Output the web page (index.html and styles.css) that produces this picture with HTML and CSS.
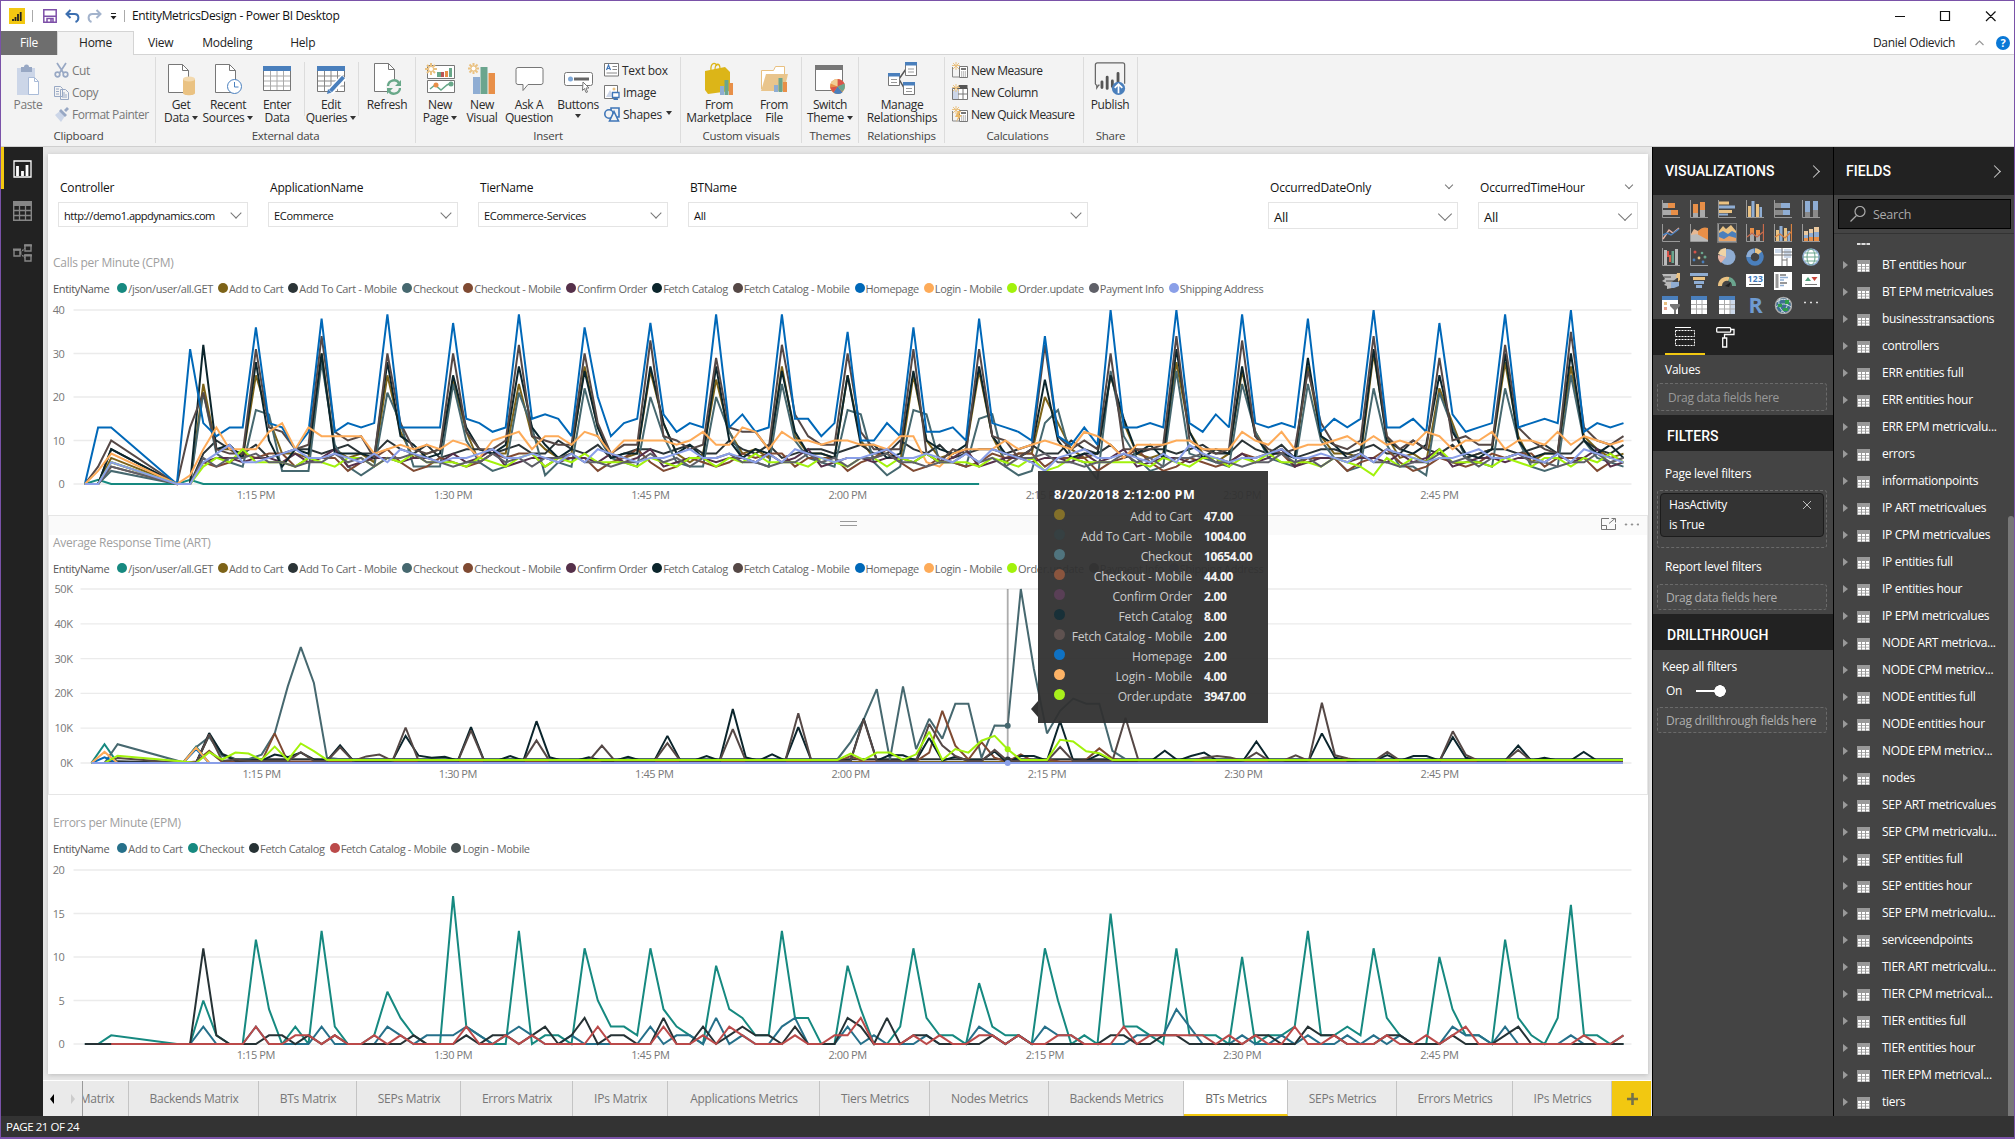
FILE: index.html
```html
<!DOCTYPE html>
<html lang="en">
<head>
<meta charset="utf-8">
<title>EntityMetricsDesign - Power BI Desktop</title>
<link rel="stylesheet" href="styles.css">
</head>
<body>
<div class="window">
  <header class="titlebar">
    <svg class="logo" width="16" height="16" viewBox="0 0 16 16"><rect width="16" height="16" fill="#f2c811"/><path d="M4 11v2M6.5 9v4M9 6v7M11.700 4v9" stroke="#222" stroke-width="1.800"/></svg>
    <i class="tsep"></i>
    <svg class="save" width="14" height="14" viewBox="0 0 14 14" fill="none" stroke="#7d4fa8" stroke-width="1.500"><path d="M.8.800h12.400v12.400H.8zM1 7.200h12M4 13V9.500h6V13M8 10v3"/></svg>
    <svg class="undo" width="15" height="14" viewBox="0 0 15 14" fill="none" stroke="#3c6fb0" stroke-width="2"><path d="M5.500 1 1.500 5l4 4M2 5h7.500c5 0 5 6.500 1 8"/></svg>
    <svg class="redo" width="15" height="14" viewBox="0 0 15 14" fill="none" stroke="#a3b3cc" stroke-width="2"><path d="m9.500 1 4 4-4 4M13 5H5.500c-5 0-5 6.500-1 8"/></svg>
    <svg class="more" width="7" height="8" viewBox="0 0 7 8"><path d="M1 1.500h5" stroke="#222"/><path d="M.5 4h6l-3 3.500z" fill="#222"/></svg>
    <i class="tsep"></i>
    <span class="apptitle">EntityMetricsDesign - Power BI Desktop</span>
    <svg class="winctl" width="104" height="12" viewBox="0 0 104 12" fill="none" stroke="#111" stroke-width="1.200"><path d="M1 6.500h10M46.500 1.500h9v9h-9zM92 1.500l9.500 9.500M101.500 1.500 92 11"/></svg>
  </header>
  <nav class="tabs">
    <span class="tab file">File</span><span class="tab home">Home</span><span class="tab">View</span><span class="tab modeling">Modeling</span><span class="tab help">Help</span>
    <span class="user">Daniel Odievich</span>
    <svg width="9" height="6" viewBox="0 0 9 6" fill="none" stroke="#999" stroke-width="1.200"><path d="M.5 5 4.500 1l4 4"/></svg>
    <span class="helpdot">?</span>
  </nav>

  <section class="ribbon">
    <div class="group g-clip"><div class="tools">
      <div class="btn w52 dim"><svg width="24" height="32" viewBox="0 0 24 32"><path d="M1 5h18v27H1z" fill="#ccd6e8"/><path d="M5 4h3a2.500 2.500 0 0 1 5 0h3v5H5z" fill="#98a8c4"/><path d="M12.500 14.500h6l4 4v13h-10z" fill="#fff" stroke="#a9bbd8"/><path d="M18.500 14.500v4h4" fill="none" stroke="#a9bbd8"/></svg><b>Paste</b></div>
      <div class="col dim">
        <p><svg width="15" height="16" viewBox="0 0 15 16" fill="none" stroke="#98a8c4" stroke-width="1.700"><path d="m3 1 6.500 10M12 1 5.500 11"/><circle cx="3.500" cy="12.500" r="2.300"/><circle cx="11.500" cy="12.500" r="2.300"/></svg>Cut</p>
        <p><svg width="15" height="15" viewBox="0 0 15 15" fill="#f3f3f3" stroke="#98a8c4"><path d="M.5 1.500h6l2 2v8h-8zM6.500 4.500h5l3 3v7h-8z"/><path d="M2 4h3M2 6.500h3M2 9h3M8 8h3M8 10h5M8 12h5"/></svg>Copy</p>
        <p><svg width="15" height="15" viewBox="0 0 15 15"><path d="m1 8 5-4 5 5-4 6z" fill="#ccd6e8"/><path d="m5 4 2-2 6 6-2 2zM10 3l3-3 2 2-3 3z" fill="#98a8c4"/></svg>Format Painter</p>
      </div></div><h6>Clipboard</h6></div>

    <div class="group g-ext"><div class="tools">
      <div class="btn w50"><svg width="28" height="32" viewBox="0 0 28 32"><path d="M1.500 1.500h14l6 6v22h-20z" fill="#fff" stroke="#777"/><path d="M15.500 1.500v6h6" fill="none" stroke="#777"/><path d="M16 16h12v14c0 3-12 3-12 0z" fill="#eac282"/><ellipse cx="22" cy="16" rx="6" ry="2.500" fill="#f3d9ae"/></svg><b>Get<br>Data<u></u></b></div>
      <div class="btn w44"><svg width="28" height="32" viewBox="0 0 28 32"><path d="M1.500 1.500h14l6 6v22h-20z" fill="#fff" stroke="#777"/><path d="M15.500 1.500v6h6" fill="none" stroke="#777"/><circle cx="20.500" cy="23.500" r="7" fill="#fff" stroke="#4a80bf"/><path d="M20.500 19v5h4" fill="none" stroke="#4a80bf"/></svg><b>Recent<br>Sources<u></u></b></div>
      <div class="btn w54"><svg width="28" height="32" viewBox="0 0 28 32"><path d="M.5 3.500h27v24H.5z" fill="#fff" stroke="#777"/><path d="M0 3h28v5H0z" fill="#4a7fbc"/><path d="M1 13h26M1 18h26M1 23h26M7.500 8v19M14 8v19M20.500 8v19" stroke="#aaa"/></svg><b>Enter<br>Data</b></div>
      <div class="btn w54 lined"><svg width="29" height="32" viewBox="0 0 29 32"><path d="M.5 3.500h27v25H.5z" fill="#fff" stroke="#777"/><path d="M0 3h28v5H0z" fill="#4a7fbc"/><path d="M1 13h26M1 18h26M1 23h26M7.500 8v20M14 8v20M20.500 8v20" stroke="#888"/><path d="M27 14 13 29" stroke="#fff" stroke-width="7"/><path d="m26.500 14-13 14" stroke="#4a7fbc" stroke-width="4"/><path d="m10 31 1-5 3.500 3.500z" fill="#4a7fbc"/></svg><b>Edit<br>Queries<u></u></b></div>
      <div class="btn w58 lined"><svg width="28" height="32" viewBox="0 0 28 32"><path d="M1.500.500h14l6 6v22h-20z" fill="#fff" stroke="#777"/><path d="M15.500.500v6h6" fill="none" stroke="#777"/><circle cx="21" cy="24" r="8" fill="#f3f3f3"/><path d="M15 23a6 6 0 0 1 11-3M27 25a6 6 0 0 1-11 3" fill="none" stroke="#68a889" stroke-width="2.300"/><path d="M28 17v6h-6zM14 31v-6h6z" fill="#68a889"/></svg><b>Refresh</b></div>
    </div><h6>External data</h6></div>

    <div class="group g-ins"><div class="tools">
      <div class="btn w48"><svg width="30" height="32" viewBox="0 0 30 32"><path d="M2.500 2.500h27v13h-27zM2.500 17.500h27v12h-27z" fill="#fff" stroke="#777"/><path d="M16 9h3v5h-3z" fill="#b55"/><path d="M12 9h4v5h-4zM24 5h3v9h-3z" fill="#68a889"/><path d="M20 8h3v6h-3z" fill="#e88f48"/><path d="m5 26 5-4 6 5 6-5 4-2" fill="none" stroke="#68a889" stroke-width="1.500"/><circle cx="11" cy="22" r="2.500" fill="#e88f48"/><circle cx="26" cy="21" r="2.500" fill="#68a889"/><path d="M0 6h12M6 0v12M2 2l8 8M10 2 2 10" stroke="#eac282" stroke-width="2"/><circle cx="6" cy="6" r="2" fill="#fff"/></svg><b>New<br>Page<u></u></b></div>
      <div class="btn w36"><svg width="28" height="32" viewBox="0 0 28 32"><path d="M5 14h7v17H5z" fill="#8fadd3"/><path d="M12.500 4h7v27h-7z" fill="#6ba58e"/><path d="M20.500 10H27v21h-6.500z" fill="#e88f48"/><path d="M0 5.500h11M5.500 0v11M1.500 1.500l8 8M9.500 1.500l-8 8" stroke="#eac282" stroke-width="2"/><circle cx="5.500" cy="5.500" r="2" fill="#fff"/></svg><b>New<br>Visual</b></div>
      <div class="btn w58"><svg width="29" height="32" viewBox="0 0 29 32"><path d="M3 4.500h23a2 2 0 0 1 2 2v13a2 2 0 0 1-2 2H13l-5 6v-6H3a2 2 0 0 1-2-2v-13a2 2 0 0 1 2-2z" fill="#fff" stroke="#777"/></svg><b>Ask A<br>Question</b></div>
      <div class="btn w40"><svg width="29" height="32" viewBox="0 0 29 32"><rect x=".5" y="9.500" width="28" height="13" rx="2" fill="#fff" stroke="#777"/><circle cx="6.500" cy="16" r="2.500" fill="#7fa9d8"/><path d="M10 16h15" stroke="#666" stroke-width="3"/><path d="m19 19 6 6h-3l1.500 4-1.500.5-1.500-4-2 2z" fill="#fff" stroke="#777"/></svg><b>Buttons<br><u class="solo"></u></b></div>
      <div class="col">
        <p><svg width="15" height="14" viewBox="0 0 15 14"><path d="M.5.500h14v12.500H.5z" fill="#fff" stroke="#777"/><path d="m2.500 7 2-5 2 5M3 5.500h3" fill="none" stroke="#3f76b8" stroke-width="1.200"/><path d="M8.500 3.500H13M8.500 6.500H13M2.500 10H13" stroke="#888"/></svg>Text box</p>
        <p><svg width="16" height="15" viewBox="0 0 16 15"><path d="M.5.500h13v13H.5z" fill="#fff" stroke="#777"/><path d="m2 12 4-7 4 7z" fill="#ccd6e8"/><circle cx="10" cy="4" r="1.500" fill="#eac282"/><path d="M8.500 7.500H15v5H8.500zM11.700 13v1.500M9.500 14.500H14" fill="#fff" stroke="#3f76b8" stroke-width="1.300"/></svg>Image</p>
        <p><svg width="16" height="15" viewBox="0 0 16 15" fill="#f3f3f3" stroke="#3f76b8" stroke-width="1.600"><path d="M7 1h8v9H7z"/><circle cx="5" cy="7" r="4.200"/><path d="m10 4.500 4.500 9.500h-9z"/></svg>Shapes<u></u></p>
      </div></div><h6>Insert</h6></div>

    <div class="group g-cust"><div class="tools">
      <div class="btn w76"><svg width="30" height="34" viewBox="0 0 30 34"><path d="m1 9 20-4 5 5v19L4 32l-3-4z" fill="#dcb518"/><path d="M7 9c-1-9 5-9 6-5M11 8c0-8 5-7 5-1" fill="none" stroke="#dcb518" stroke-width="1.300"/><path d="M16 24h4v9h-4z" fill="#8fadd3"/><path d="M20.500 18h4v15h-4z" fill="#6ba58e"/><path d="M25 21h4v12h-4z" fill="#e88f48"/></svg><b>From<br>Marketplace</b></div>
      <div class="btn w34"><svg width="29" height="32" viewBox="0 0 29 32"><path d="M1.500 26V7.500h12l2-4h9V26" fill="#fff" stroke="#e8c080"/><path d="m1 28 5-17h22l-4 17z" fill="#e9c58c"/><path d="M14 22h4v7h-4z" fill="#8fadd3"/><path d="M18.500 15h4v14h-4z" fill="#6ba58e"/><path d="M23 19h4v10h-4z" fill="#e88f48"/></svg><b>From<br>File</b></div>
    </div><h6>Custom visuals</h6></div>

    <div class="group g-theme"><div class="tools">
      <div class="btn w56"><svg width="31" height="32" viewBox="0 0 31 32"><path d="M.5 2.500h27v25H.5z" fill="#fff" stroke="#777"/><path d="M0 2h28v5H0z" fill="#777"/><circle cx="22.500" cy="23.500" r="7.500" fill="#e88f48"/><path d="M22.500 23.500V16a8 8 0 0 1 7 5z" fill="#d9534a"/><path d="m22.500 23.500 7-3a8 8 0 0 1-2 8z" fill="#6ba58e"/><path d="m22.500 23.500 5 6a8 8 0 0 1-9 0z" fill="#4a7fbc"/><path d="m22.500 23.500-7-3A8 8 0 0 1 22.500 16z" fill="#f1cd94"/><path d="m22.500 23.500-4 6-3.500-5z" fill="#d9534a"/></svg><b>Switch<br>Theme<u></u></b></div>
    </div><h6>Themes</h6></div>

    <div class="group g-rel"><div class="tools">
      <div class="btn w86"><svg width="29" height="34" viewBox="0 0 29 34"><path d="M11 17 18 7M11 17l5 9" stroke="#555" fill="none" stroke-width="1.500"/><path d="M.5 11.500h11v12H.5zM17.500.500h11v13h-11zM15.500 20.500h11v12h-11z" fill="#fff" stroke="#777"/><path d="M0 11h12v3.500H0zM17 0h12v3.500H17zM15 20h12v3.500H15z" fill="#4a7fbc"/><path d="M3 17.500h6M3 20.500h6M20 7h6M20 10h6M18 26.500h6M18 29.500h6" stroke="#999"/></svg><b>Manage<br>Relationships</b></div>
    </div><h6>Relationships</h6></div>

    <div class="group g-calc"><div class="tools">
      <div class="col">
        <p><svg width="16" height="16" viewBox="0 0 16 16"><path d="M.5 5v10H7" fill="none" stroke="#888"/><path d="M7.500 4.500h8v11h-8z" fill="#fff" stroke="#777"/><path d="M9 7h5" stroke="#777" stroke-width="2"/><path d="M9 10h5M9 12h5M9 14h5" stroke="#888" stroke-dasharray="1.300 .7"/><path d="M0 3.500h8M4 0v8M1 1l6 6M7 1 1 7" stroke="#eac282"/></svg>New Measure</p>
        <p><svg width="16" height="16" viewBox="0 0 16 16"><path d="M.5 4.500h15v11H.5zM0 10h15M6 5v10M11 2v13" fill="#fff" stroke="#777"/><path d="M6.500 1h9v4h-9z" fill="#555"/><path d="M1 6h5v9H1z" fill="#ccd6e8"/><path d="M0 3.500h8M4 0v8M1 1l6 6M7 1 1 7" stroke="#eac282"/></svg>New Column</p>
        <p><svg width="16" height="16" viewBox="0 0 16 16"><path d="M.5 5v10H7" fill="none" stroke="#888"/><path d="M7.500 4.500h8v11h-8z" fill="#fff" stroke="#777"/><path d="M9 7h5" stroke="#777" stroke-width="2"/><path d="M9 10h5M9 12h5M9 14h5" stroke="#888" stroke-dasharray="1.300 .7"/><path d="M0 3.500h8M4 0v8M1 1l6 6M7 1 1 7" stroke="#eac282"/><path d="m6 5-3 6h3l-2 5 6-7H7l2-4z" fill="#eab868"/></svg>New Quick Measure</p>
      </div></div><h6>Calculations</h6></div>

    <div class="group g-share"><div class="tools">
      <div class="btn w52"><svg width="32" height="36" viewBox="0 0 32 36"><path d="M5 24.500H4l-2 3v-3A2 2 0 0 1 .500 22V3A2 2 0 0 1 2.500 1h27a2 2 0 0 1 2 2v20" fill="none" stroke="#666" stroke-width="1.300"/><path d="M7.500 21v6M13 16v12M18.500 20v6M24.500 12v10" stroke="#555" stroke-width="3" stroke-linecap="round"/><circle cx="25" cy="28" r="7" fill="#4a7fbc"/><path d="M25 33v-9M21 27.500l4-4 4 4" fill="none" stroke="#fff" stroke-width="1.800"/></svg><b>Publish</b></div>
    </div><h6>Share</h6></div>
  </section>

  <main class="work">
    <aside class="rail">
      <span class="on"><svg width="19" height="18" viewBox="0 0 19 18"><path d="M1 1h17v16H1z" fill="none" stroke="#fff" stroke-width="1.300"/><path d="M4.500 6v10M9.500 11v5M14 5v11" stroke="#fff" stroke-width="2.800"/></svg></span>
      <span><svg width="19" height="20" viewBox="0 0 19 20"><path d="M.7.700h17.600v18.600H.7z" fill="none" stroke="#868686" stroke-width="1.400"/><path d="M0 0h19v5H0z" fill="#868686"/><path d="M0 9.500h19M0 14.500h19M6.500 4v16M12.500 4v16" stroke="#868686" stroke-width="1.300"/></svg></span>
      <span><svg width="19" height="18" viewBox="0 0 19 18" fill="none" stroke="#868686" stroke-width="1.400"><path d="M1 6h6v6H1zM12 1h6v6h-6zM12 11h6v6h-6z"/><path d="m7 9 5-5M7 9l5 5" stroke-dasharray="2 1"/><path d="M0 5.500h8M11 1.500h8M11 11.500h8" stroke-width="2"/></svg></span>
    </aside>

    <section class="center">
      <div class="page">
        <div class="slicers">
          <div class="slicer s1"><label>Controller</label><div>http://demo1.appdynamics.com<i class="chev"></i></div></div>
          <div class="slicer s2"><label>ApplicationName</label><div>ECommerce<i class="chev"></i></div></div>
          <div class="slicer s3"><label>TierName</label><div>ECommerce-Services<i class="chev"></i></div></div>
          <div class="slicer s4"><label>BTName</label><div>All<i class="chev"></i></div></div>
          <div class="slicer s5 big"><label>OccurredDateOnly<i class="chev sm"></i></label><div>All<i class="chev"></i></div></div>
          <div class="slicer s6 big"><label>OccurredTimeHour<i class="chev sm"></i></label><div>All<i class="chev"></i></div></div>
        </div>
        <div class="visual" id="cpm"><h3>Calls per Minute (CPM)</h3><div class="legend"></div></div>
        <div class="visual selected" id="art"><div class="vhead"><i class="grip"></i><svg width="38" height="13" viewBox="0 0 38 13" fill="none" stroke="#777"><path d="M8 .500H.500v11h14V6M.500 7.500h5v4M8 5.500 14 .500M10.500.500h4v4"/><circle cx="25" cy="6.500" r=".7"/><circle cx="31" cy="6.500" r=".7"/><circle cx="37" cy="6.500" r=".7"/></svg></div><h3>Average Response Time (ART)</h3><div class="legend"></div></div>
        <div class="visual" id="epm"><h3>Errors per Minute (EPM)</h3><div class="legend"></div></div>
        <div class="tooltip"><h4>8/20/2018 2:12:00 PM</h4><div class="rows"></div></div>
      </div>
      <nav class="pages">
        <span class="arrows"><i class="l"></i><i class="r"></i></span><span class="p0"><em>Matrix</em></span><span class="p1">Backends Matrix</span><span class="p2">BTs Matrix</span><span class="p3">SEPs Matrix</span><span class="p4">Errors Matrix</span><span class="p5">IPs Matrix</span><span class="p6">Applications Metrics</span><span class="p7">Tiers Metrics</span><span class="p8">Nodes Metrics</span><span class="p9">Backends Metrics</span><span class="p10 active">BTs Metrics</span><span class="p11">SEPs Metrics</span><span class="p12">Errors Metrics</span><span class="p13">IPs Metrics</span><span class="add"><svg width="11" height="12" viewBox="0 0 11 12"><path d="M5.500 0v12M0 6h11" stroke="#75724a" stroke-width="2.600"/></svg></span>
      </nav>
    </section>

    <aside class="viz">
      <h2>VISUALIZATIONS<i class="chev right"></i></h2>
      <div class="gallery">
        <svg viewBox="0 0 18 18"><path d="M.5 0v17.500H18" class="ax"/><path d="M1 3h5v5H1zM1 10h8v5H1z" fill="#aaa"/><path d="M6 3h7v5H6zM9 10h7v5H9z" fill="#e88f48"/></svg>
        <svg viewBox="0 0 18 18"><path d="M.5 0v17.500H18" class="ax"/><path d="M3 4h5v9H3zM10 2h5v8h-5z" fill="#e88f48"/><path d="M3 13h5v4H3zM10 10h5v7h-5z" fill="#aaa"/></svg>
        <svg viewBox="0 0 18 18"><path d="M.5 0v17.500H18" class="ax"/><path d="M1 1.500h10v3H1zM1 10h13v3H1z" fill="#eac282"/><path d="M1 5.500h16v3H1zM1 13.500h9v2H1z" fill="#8fadd3"/></svg>
        <svg viewBox="0 0 18 18"><path d="M.5 0v17.500H18" class="ax"/><path d="M2 6h3v11H2zM10 4h3v13h-3z" fill="#eac282"/><path d="M5.500 1h3v16h-3zM13.500 7h2.500v10h-2.500z" fill="#8fadd3"/></svg>
        <svg viewBox="0 0 18 18"><path d="M.5 0v17.500H18" class="ax"/><path d="M1 3h6v5H1zM1 10h8v5H1z" fill="#8a8a8a"/><path d="M7 3h9v5H7zM9 10h7v5H9z" fill="#8fadd3"/></svg>
        <svg viewBox="0 0 18 18"><path d="M.5 0v17.500H18" class="ax"/><path d="M3 1h5v11H3zM11 1h5v9h-5z" fill="#8fadd3"/><path d="M3 12h5v5H3zM11 10h5v7h-5z" fill="#8a8a8a"/></svg>

        <svg viewBox="0 0 18 18"><path d="M.5 0v17.500H18" class="ax"/><path d="m1 15 6-9 4 3 6-5" fill="none" stroke="#e7b3a3" stroke-width="1.400"/><path d="m1 11 4-2 4 2 8-6" fill="none" stroke="#4a7fbc" stroke-width="1.400"/></svg>
        <svg viewBox="0 0 18 18"><path d="m1 10 3-5 4 2 6-3 4 3v10H1z" fill="#e7b994"/><path d="M8 7c4-4 7-4 10-3v13H8z" fill="#e88f48"/><path d="m1 11 6-1 11 6v1H1z" fill="#bbb"/><path d="M.5 0v17.500H18" class="ax"/></svg>
        <svg class="picked" viewBox="0 0 18 18"><path d="m1 7 4-5 3 3 5-4 5 6v4H1z" fill="#eac282"/><path d="m1 9 4-2 5 3 4-3 4 2v8H1z" fill="#4a7fbc"/><path d="m1 13 5 2 5-3 7 2v3H1z" fill="#e8a468"/><path d="M.5 0v17.500H18" class="ax"/></svg>
        <svg viewBox="0 0 18 18"><path d="M.5 0v17.500H18" class="ax"/><path d="M4 4h4v5H4zM10 6h4v5h-4z" fill="#e88f48"/><path d="M4 9h4v8H4zM10 11h4v6h-4z" fill="#aaa"/><path d="m1 13 5-4 5 4 6-5M17.500 0v17" fill="none" stroke="#c96a4a" stroke-width="1.300"/></svg>
        <svg viewBox="0 0 18 18"><path d="M.5 0v17.500H18" class="ax"/><path d="M2 6h3v11H2zM10 4h3v13h-3z" fill="#eac282"/><path d="M5.500 2h3v15h-3zM13.500 7h2.500v10h-2.500z" fill="#8fadd3"/><path d="m1 13 5-3 5 4 6-6M17.500 0v17" fill="none" stroke="#d98240" stroke-width="1.300"/></svg>
        <svg viewBox="0 0 18 18"><path d="M.5 0v17.500H18" class="ax"/><path d="M2 7h4v4H2zM7 5h4v4H7zM12 3h5v5h-5z" fill="#eac9a0"/><path d="M2 11h4v3H2zM7 9h4v4H7zM12 8h5v5h-5z" fill="#8fadd3"/><path d="M2 14h4v3H2zM7 13h4v4H7zM12 13h5v4h-5z" fill="#e88f48"/></svg>

        <svg viewBox="0 0 18 18"><path d="M.5 0v17.500H18" class="ax"/><path d="M2 2h3v15H2zM13 1h3v16h-3z" fill="#bbb"/><path d="M5 3h2v6H5z" fill="#d9534a"/><path d="M7 7h2v7H7z" fill="#d9624a"/><path d="M9.500 3H12v12H9.500z" fill="#6ba58e"/></svg>
        <svg viewBox="0 0 18 18"><path d="M.5 0v17.500H18" class="ax"/><circle cx="5" cy="4" r="1.500" fill="#d9534a"/><circle cx="12" cy="5" r="1.300" fill="#6ba58e"/><circle cx="4" cy="12" r="1.400" fill="#4a7fbc"/><circle cx="9" cy="10" r="1.400" fill="#eac282"/><circle cx="15" cy="9" r="1.500" fill="#6ba58e"/><circle cx="13" cy="14" r="1.400" fill="#4a7fbc"/></svg>
        <svg viewBox="0 0 18 18"><circle cx="9.500" cy="9" r="8" fill="#8fadd3"/><path d="M8 9V0a8.500 8.500 0 0 0-8 6z" fill="#f1d4a6"/><path d="M8 9 0 7c-.5 4 1 6 3 8z" fill="#e7b3a3"/></svg>
        <svg viewBox="0 0 18 18"><circle cx="9" cy="9" r="6.500" fill="none" stroke="#4a7fbc" stroke-width="4.500"/><path d="M9 2.500A6.500 6.500 0 0 1 14 5" fill="none" stroke="#eac282" stroke-width="4.500"/><path d="M2.600 9A6.500 6.500 0 0 1 8 2.600" fill="none" stroke="#8fadd3" stroke-width="4.500"/></svg>
        <svg viewBox="0 0 18 18"><path d="M0 0h18v18H0z" fill="#fff"/><path d="M1 1h8v4H1zM10 1h7v9h-7z" fill="#ccd9ea"/><path d="M8 0v18M0 7h18M8 4h10M13 10v8M8 12h5" stroke="#777" fill="none"/></svg>
        <svg viewBox="0 0 18 18"><circle cx="9" cy="9" r="8" fill="#fff" stroke="#8fadd3" stroke-width="1.500"/><ellipse cx="9" cy="9" rx="4" ry="8" fill="none" stroke="#6ba58e"/><path d="M1 9h16M3 5h12M3 13h12" stroke="#6ba58e"/></svg>

        <svg viewBox="0 0 18 18"><path d="M0 2h15v4l-5 4v6l-5 1v-3l-3-1 2-2-4-2 3-2z" fill="#bbb"/><path d="M15 1h3v7l-2 2v-4h-2z" fill="#eac282"/><path d="M9 10h8v4l-5 2H9z" fill="#8fadd3"/><path d="M2 5h7M4 9h9" stroke="#444"/></svg>
        <svg viewBox="0 0 18 18"><path d="M0 1h18v3H0z" fill="#8fadd3"/><path d="M3 5h12v3H3z" fill="#eac282"/><path d="M4 9h10v3H4zM6 13h6v3H6z" fill="#8fadd3"/></svg>
        <svg viewBox="0 0 18 18"><path d="M2 14a7 7 0 0 1 9-7" fill="none" stroke="#eac282" stroke-width="4"/><path d="M11 7a7 7 0 0 1 5 7" fill="none" stroke="#6ba58e" stroke-width="4"/><path d="m7 14 6-4-2 5z" fill="#222"/></svg>
        <svg viewBox="0 0 18 18"><path d="M0 2h18v13H0z" fill="#fff"/><text x="1.500" y="9.500" font-size="8.500" font-weight="700" fill="#3f76b8" textLength="15">123</text><path d="M3 12.500h12" stroke="#555"/></svg>
        <svg viewBox="0 0 18 18"><path d="M0 0h18v18H0z" fill="#fff"/><path d="M1.500 2h3v14h-3z" fill="#999"/><path d="M6 3h6M6 11h7" stroke="#777" stroke-width="1.400"/><path d="M6 5.500h8M6 8h4M6 13.500h4" stroke="#8fadd3" stroke-width="1.400"/></svg>
        <svg viewBox="0 0 18 18"><path d="M0 2h18v13H0z" fill="#fff"/><path d="m3 9 3-4 3 4z" fill="#4fa07a"/><path d="m9.500 5 3 4 3-4z" fill="#c8453a"/><path d="M3 12.500h12" stroke="#777"/></svg>

        <svg viewBox="0 0 18 18"><path d="M0 1h16v17H0z" fill="#fff"/><path d="M0 0h16v4H0z" fill="#4a7fbc"/><path d="M2 6h3v3H2z" fill="#eac282"/><path d="M2 11h3v3H2z" fill="#e7a08a"/><path d="M8 8h10v2l-4 4v4h-2v-4L8 10z" fill="#777"/></svg>
        <svg viewBox="0 0 18 18"><path d="M1 0h16v18H1z" fill="#fff"/><path d="M1 0h16v4H1z" fill="#4a7fbc"/><path d="M1 8.500h16M1 13h16M6.500 4v14M12 4v14" stroke="#aaa"/></svg>
        <svg viewBox="0 0 18 18"><path d="M1 0h16v18H1z" fill="#fff"/><path d="M12 4h5v14h-5z" fill="#ccd9ea"/><path d="M1 0h16v4H1z" fill="#4a7fbc"/><path d="M1 8.500h16M1 13h16M6.500 4v14M12 4v14" stroke="#aaa"/></svg>
        <svg viewBox="0 0 18 18"><text x="2.500" y="17" font-size="22" font-weight="700" fill="#6f9bd1" textLength="14" lengthAdjust="spacingAndGlyphs">R</text></svg>
        <svg viewBox="0 0 18 18"><circle cx="9.500" cy="9.500" r="8" fill="#3f6f93" stroke="#aaa" stroke-width="1.500"/><path d="M3 6c4-4 9-3 13 0M2 11c5-4 10-4 15 0M6 2c-3 5 0 12 5 15M13 2c2 5 0 12-6 14" fill="none" stroke="#cfdde0"/><path d="M11 4h4v4h-4zM4 8h4v3H4zM9 12h5v3H9z" fill="#2e9e4b"/></svg>
        <svg viewBox="0 0 18 18"><path d="M2 6.500h2M8 6.500h2M14 6.500h2" stroke="#ddd" stroke-width="1.500"/></svg>
      </div>
      <div class="modes">
        <span class="on"><svg width="20" height="20" viewBox="0 0 20 20" fill="none" stroke="#fff"><path d="M0 .500h16"/><path d="M.5 3.500h19v6H.500zM.500 12.500h19v6H.500z" stroke-dasharray="2 1"/></svg></span>
        <span><svg width="19" height="21" viewBox="0 0 19 21" fill="none" stroke="#fff" stroke-width="1.300"><rect x=".7" y=".7" width="14" height="4.500" rx="1"/><path d="M15 2.500h3v5H8.500v3M6.700 11h4v9h-4z"/></svg></span>
      </div>
      <div class="wells">
        <p class="cap">Values</p><div class="drop v">Drag data fields here</div>
      </div>
      <h2 class="sub">FILTERS</h2>
      <div class="wells">
        <p class="cap pl">Page level filters</p>
        <div class="drop card"><div>HasActivity<br>is True<svg width="10" height="10" viewBox="0 0 10 10" stroke="#bbb"><path d="m1 1 8 8M9 1 1 9"/></svg></div></div>
        <p class="cap rl">Report level filters</p><div class="drop">Drag data fields here</div>
      </div>
      <h2 class="sub">DRILLTHROUGH</h2>
      <div class="wells">
        <p class="cap kf">Keep all filters</p>
        <p class="toggle">On<i></i></p>
        <div class="drop">Drag drillthrough fields here</div>
      </div>
    </aside>

    <aside class="fields">
      <h2>FIELDS<i class="chev right"></i></h2>
      <div class="search"><svg width="16" height="16" viewBox="0 0 16 16" fill="none" stroke="#aaa" stroke-width="1.200"><circle cx="10" cy="5.500" r="5"/><path d="M6.500 9.500.500 15.500"/></svg>Search</div>
      <div class="list"><i class="clip"></i><i class="thumb"></i></div>
    </aside>
  </main>
  <footer class="status">PAGE 21 OF 24</footer>
</div>
<script src="script.js"></script>
</body>
</html>
```
FILE: styles.css
```css
* { box-sizing: border-box; }
body { margin: 0; font-family: "Open Sans", "Noto Sans", sans-serif; font-size: 12px; letter-spacing: -0.25px; color: #222; }
h2, h3, h4, h6, p { margin: 0; font-weight: 400; font-size: inherit; }
svg { display: block; flex: none; }
.window { width: 2015px; height: 1139px; border: 1px solid #7a52a8; border-bottom-width: 2px; display: flex; flex-direction: column; background: #fff; overflow: hidden; }

.titlebar { height: 30px; display: flex; align-items: center; padding: 0 0 1px 8px; flex: none; }
.tsep { width: 1px; height: 12px; background: #aaa; }
.titlebar .tsep { margin-left: 7px; }
.save { margin-left: 10px; }
.undo { margin-left: 8px; }
.redo { margin-left: 7px; }
.more { margin-left: 8px; }
.apptitle { margin-left: 7px; color: #111; letter-spacing: -0.33px; }
.winctl { margin-left: auto; margin-right: 16px; }

.tabs { height: 24px; display: flex; align-items: center; flex: none; border-bottom: 1px solid #d4d4d4; }
.tab { height: 24px; line-height: 24px; }
.file { width: 56px; text-align: center; background: #6e6e6e; color: #fff; }
.home { width: 77px; text-align: center; background: #f3f3f3; border: 1px solid #d4d4d4; border-bottom: 0; line-height: 22px; margin-right: 14px; }
.modeling { margin-left: 29px; }
.help { margin-left: 38px; }
.user { margin-left: auto; margin-right: 20px; letter-spacing: -0.35px; }
.helpdot { width: 14px; height: 14px; border-radius: 50%; background: #0a78d6; color: #fff; font-weight: 700; font-size: 11px; line-height: 14px; text-align: center; margin: 0 4px 0 12px; }

.ribbon { height: 92px; display: flex; background: #f3f3f3; border-bottom: 1px solid #cfcfcf; flex: none; color: #2a2a2a; }
.group { border-right: 1px solid #dcdcdc; margin: 2px 0 3px; display: flex; flex-direction: column; }
.tools { display: flex; height: 73px; }
.group h6 { text-align: center; line-height: 14px; color: #444; font-size: 11.500px; white-space: nowrap; }
.g-clip { width: 155px; padding-left: 1px; }
.g-ext { width: 260px; }
.g-ins { width: 265px; }
.g-cust { width: 121px; }
.g-theme { width: 57px; }
.g-rel { width: 86px; }
.g-calc { width: 139px; padding-left: 7px; }
.g-share { width: 54px; }
.btn { display: flex; flex-direction: column; align-items: center; padding-top: 5px; flex: none; }
.btn svg { height: 34px; margin-bottom: 2px; }
.btn b { font-weight: 400; font-size: 12px; line-height: 13px; text-align: center; white-space: nowrap; letter-spacing: -0.35px; }
.lined { position: relative; }
.lined::before { content: ""; position: absolute; left: 0; top: 5px; width: 1px; height: 54px; background: #dcdcdc; }
.w34 { width: 34px; } .w36 { width: 36px; } .w40 { width: 40px; } .w44 { width: 44px; } .w48 { width: 48px; } .w50 { width: 50px; }
.w52 { width: 52px; } .w54 { width: 54px; } .w56 { width: 56px; } .w58 { width: 58px; } .w76 { width: 76px; } .w86 { width: 86px; }
.ribbon u { display: inline-block; border: 3px solid transparent; border-top: 4px solid #333; border-bottom: 0; margin: 0 0 2px 3px; }
.ribbon u.solo { margin: 0 0 4px; }
.col { padding-top: 2px; }
.g-ins .col { padding-left: 6px; }
.g-clip .col, .g-calc .col { letter-spacing: -0.5px; }
.col p { height: 22px; display: flex; align-items: center; white-space: nowrap; }
.col svg { margin-right: 3px; }
.col u { margin-left: 4px; }
.dim { color: #777; }

.work { flex: 1; display: flex; min-height: 0; }
.rail { width: 42px; background: #222; flex: none; }
.rail span { display: flex; justify-content: center; align-items: center; height: 42px; border-left: 3px solid transparent; padding: 2px 3px 0 0; }
.rail .on { border-color: #f2c811; }
.center { width: 1609px; background: #e7e7e7; display: flex; flex-direction: column; flex: none; overflow: hidden; }
.page { position: relative; width: 1600px; height: 920px; margin: 7px 0 6px 5px; background: #fff; box-shadow: 0 1px 5px #bbb; flex: none; }
.slicers { display: flex; height: 81px; padding-top: 25px; color: #111; }
.slicer label { display: flex; align-items: center; justify-content: space-between; height: 17px; padding: 0 4px 0 2px; margin-bottom: 6px; letter-spacing: -0.2px; }
.slicer div { height: 25px; border: 1px solid #e4e4e4; display: flex; align-items: center; justify-content: space-between; padding: 2px 7px 0 5px; font-size: 11px; letter-spacing: -0.3px; }
.slicer.s1 div { letter-spacing: -0.48px; }
.slicer.big div { height: 27px; font-size: 13px; padding-top: 2px; }
.s1, .s2, .s3 { width: 190px; margin-right: 20px; }
.s1 { margin-left: 10px; }
.s4 { width: 400px; margin-right: 180px; }
.s5 { width: 190px; margin-right: 20px; }
.s6 { width: 160px; }
.chev { width: 8px; height: 8px; border: solid #777; border-width: 0 1px 1px 0; transform: rotate(45deg); margin-top: -6px; }
.big div .chev { width: 10px; height: 10px; }
.chev.sm { width: 6px; height: 6px; margin: -5px 2px 0 0; }

.visual { height: 280px; position: relative; }
.visual h3 { padding: 18px 0 0 5px; line-height: 20px; height: 43px; color: #a0a0a0; letter-spacing: -0.27px; }
.visual.selected { border: 1px solid #e6e6e6; }
.visual.selected h3 { position: relative; margin-top: -1px; padding-left: 4px; }
.visual.selected .legend, .visual.selected .plot { margin-left: -1px; }
.vhead { position: absolute; left: 0; right: 0; top: 0; height: 19px; background: #fafafa; }
.vhead svg { position: absolute; right: 8px; top: 2px; }
.grip { position: absolute; left: 791px; top: 5px; width: 17px; height: 5px; border: solid #999; border-width: 1px 0; }
.legend { display: flex; align-items: center; height: 20px; padding-left: 5px; color: #666; font-size: 11px; letter-spacing: -0.345px; white-space: nowrap; }
.legend b { font-weight: 400; color: #555; margin-right: 8px; }
.legend span { display: flex; align-items: center; margin-right: 5px; }
.legend i { width: 10px; height: 10px; border-radius: 50%; margin-right: 1px; }
.plot text { font-size: 11px; fill: #777; letter-spacing: -0.4px; }
.plot polyline { fill: none; stroke-width: 2; stroke-linejoin: miter; stroke-miterlimit: 2; }

.tooltip { position: absolute; left: 990px; top: 317px; width: 230px; height: 252px; background: rgba(48,48,48,.95); color: #fff; padding: 14px 0 0 16px; }
.tooltip::before { content: ""; position: absolute; left: -7px; top: 230px; border: 8px solid transparent; border-right: 7px solid #333; border-left: 0; }
.tooltip h4 { font-size: 12.500px; font-weight: 700; line-height: 20px; letter-spacing: 0.6px; margin-bottom: 1px; }
.tooltip .rows div { display: flex; align-items: center; height: 20px; }
.tooltip i { width: 11px; height: 11px; border-radius: 50%; margin-top: -3px; }
.tooltip span { width: 127px; text-align: right; color: #ccc; margin-right: 12px; letter-spacing: -0.15px; }
.tooltip b { font-weight: 700; letter-spacing: -0.4px; color: #f5f5f5; }

.pages { display: flex; height: 36px; border-top: 1px solid #fff; background: #eaeaea; color: #777; width: 1608px; flex: none; }
.pages span { border-right: 1px solid #c4c4c4; display: flex; align-items: center; justify-content: center; overflow: hidden; white-space: nowrap; flex: none; padding-left: 1px; }
.pages .arrows { width: 40px; justify-content: flex-start; gap: 17px; padding-left: 7px; border-color: #999; }
.arrows i { border: 5px solid transparent; border-left: 0; border-right: 4px solid #000; }
.arrows .r { border-right: 0; border-left: 4px solid #ccc; }
.pages em { font-style: normal; margin-left: -18px; }
.p0 { width: 46px; } .p1 { width: 130px; } .p2 { width: 98px; } .p3 { width: 104px; } .p4 { width: 112px; } .p5 { width: 95px; } .p6 { width: 152px; }
.p7 { width: 110px; } .p8 { width: 119px; } .p9 { width: 135px; } .p10 { width: 104px; } .p11 { width: 109px; } .p12 { width: 116px; } .p13 { width: 99px; }
.pages .active { background: #fff; border-bottom: 2px solid #f2c811; padding-top: 2px; margin-top: -1px; color: #666; }
.pages .add { width: 39px; background: #f2c811; border: 0; }

.viz, .fields { background: #444; color: #fff; border-left: 1px solid #000; display: flex; flex-direction: column; }
.viz { width: 181px; flex: none; }
.fields { flex: 1; }
.viz h2, .fields h2 { height: 48px; background: #222; font-family: "Roboto", sans-serif; font-size: 14px; font-weight: 500; letter-spacing: 0.05px; display: flex; align-items: center; justify-content: space-between; padding: 0 15px 0 12px; flex: none; }
.viz h2.sub { height: 36px; padding: 6px 0 0 14px; }
.chev.right { transform: rotate(-45deg); border-color: #ccc; margin-top: 0; width: 9px; height: 9px; }
.gallery { height: 124px; display: grid; grid-template-columns: repeat(6, 18px); column-gap: 10px; row-gap: 6px; padding: 5px 0 0 9px; align-content: start; flex: none; }
.gallery svg { width: 18px; height: 18px; }
.gallery .picked { outline: 1px solid #777; }
.ax { fill: none; stroke: #999; }
.modes { height: 36px; background: #222; display: flex; flex: none; padding-left: 12px; }
.modes span { width: 40px; display: flex; justify-content: center; padding-top: 8px; }
.modes .on { border-bottom: 2px solid #f2c811; }
.wells { padding: 0 6px 4px 4px; }
.cap { height: 28px; line-height: 30px; padding-left: 8px; }
.pl { height: 39px; line-height: 45px; }
.rl { height: 36px; line-height: 38px; }
.kf { height: 28px; line-height: 34px; padding-left: 5px; }
.drop { height: 26px; border: 1px dashed #6a6a6a; border-radius: 3px; background: #484848; color: #b0b0b0; line-height: 25px; padding-left: 8px; letter-spacing: -0.27px; white-space: nowrap; }
.drop.v { height: 28px; line-height: 28px; padding-left: 10px; color: #999; }
.drop.card { height: 58px; padding: 2px; background: #444; }
.card div { position: relative; height: 44px; border: 1px solid #1c1c1c; border-radius: 4px; background: #333; color: #fff; line-height: 20px; padding: 1px 0 0 8px; letter-spacing: -0.3px; }
.card svg { position: absolute; right: 11px; top: 6px; }
.toggle { height: 29px; display: flex; align-items: center; padding: 0 0 4px 9px; }
.toggle i { width: 30px; height: 12px; margin-left: 14px; background: radial-gradient(circle at 24px 6px, #fff 5.500px, transparent 6px), linear-gradient(#fff, #fff) 0 5px / 24px 2px no-repeat; }
.search { height: 30px; margin: 4px 3px 4px 4px; border: 1px solid #000; background: #222; color: #aaa; display: flex; align-items: center; gap: 7px; padding-left: 11px; flex: none; font-size: 12.500px; }
.list { position: relative; flex: 1; border-top: 1px solid #333; padding-top: 17px; overflow: hidden; }
.list div { height: 27px; display: flex; align-items: center; padding-left: 9px; white-space: nowrap; letter-spacing: -0.29px; }
.list .tri { border: 4px solid transparent; border-left: 5px solid #999; border-right: 0; }
.list div svg { margin: 2px 12px 0 9px; }
.clip { position: absolute; left: 23px; top: 9px; width: 13px; height: 2px; background: repeating-linear-gradient(90deg, #ddd 0 3px, #999 3px 5px); }
.thumb { position: absolute; right: 0; top: 282px; bottom: 0; width: 6px; background: #777; border-radius: 3px 3px 0 0; }
.status { height: 21px; background: #333; color: #fff; padding-left: 5px; line-height: 21px; font-size: 11.500px; letter-spacing: -0.45px; flex: none; }
```
FILE: script.js
```js
// Minute series run from 1:02 PM (index 0) to 2:59 PM (index 117); samples 3-6 are missing.
const LAST = 117;

function dense(text) {
  const v = text.trim().split(/\s+/).map(Number);
  return [[0, v[0]], [1, v[1]], [2, v[2]], [7, v[3]]].concat(v.slice(4).map((y, i) => [i + 8, y]));
}
function sparse(text, base = 0, from = 8, end = LAST) {
  const m = {};
  text.trim().split(/\s+/).forEach(p => { const [k, y] = p.split(':'); m[k] = +y; });
  const cyc = Array.isArray(base) ? base : [base];
  const out = [];
  for (let i = 0; i <= end; i++) {
    if (i > 2 && i < 7) continue;
    out.push([i, i in m ? m[i] : i < from ? 0 : cyc[i % cyc.length]]);
  }
  return out;
}

const C = { json: '#168980', add: '#7d6318', addm: '#2b3437', chk: '#46686f', chkm: '#7f4a32', conf: '#55304a', fc: '#0b252c', fcm: '#554846', home: '#0068b8', login: '#fdab59', order: '#a2f20c', pay: '#5f6068', ship: '#8a9fe8' };
const NAMES = [['/json/user/all.GET', C.json], ['Add to Cart', C.add], ['Add To Cart - Mobile', C.addm], ['Checkout', C.chk], ['Checkout - Mobile', C.chkm], ['Confirm Order', C.conf], ['Fetch Catalog', C.fc], ['Fetch Catalog - Mobile', C.fcm], ['Homepage', C.home], ['Login - Mobile', C.login], ['Order.update', C.order], ['Payment Info', C.pay], ['Shipping Address', C.ship]];

const charts = [
  { id: 'cpm', x0: 85.4, dx: 13.15, grid: 74, max: 40, step: 10, unit: '', yx: 52, legend: NAMES, series: [
    [C.json, sparse('1:1 8:1', 0, 8, 68)],
    [C.add, sparse('2:6 9:23 10:8 13:25 14:15 15:7 18:30 19:8 23:25 24:12 28:24 29:12 33:23 34:11 38:27 39:13 43:26 44:14 48:24 49:12 53:27 54:11 58:25 59:10 63:25 64:10 68:26 69:11 73:20 74:14 78:25 79:14 83:28 84:12 88:26 89:12 93:27 94:11 98:30 99:11 103:22 104:14 108:28 109:11 113:27 114:11', [7, 6, 7, 8, 6, 7, 5, 7], 9)],
    [C.addm, sparse('2:8', [9, 6, 7, 8, 8, 7, 8, 9, 7, 7, 10, 8, 7], 9)],
    [C.chk, sparse('2:3 9:21 10:7 13:17 14:16 15:3 16:3 17:3 18:28 19:9 20:4 21:2 23:21 24:14 25:4 26:4 27:4 28:23 29:10 30:5 31:3 33:21 34:13 35:2 38:22 39:11 43:20 44:11 45:5 46:4 47:4 48:20 49:12 53:23 54:10 58:17 59:16 60:5 61:2 63:17 64:16 65:5 67:4 68:15 69:16 70:4 71:2 72:3 73:14 74:17 75:6 77:1 78:26 79:11 81:3 82:4 83:26 84:7 88:23 89:12 93:23 94:10 96:3 97:4 98:22 99:9 100:4 101:4 102:2 103:21 104:13 108:22 109:10 110:4 111:3 113:25 114:10', [6, 5, 4, 6, 5], 9)],
    [C.chkm, sparse('2:4', [6, 3, 5, 6, 8, 5, 3, 4, 6, 5, 4, 5, 7, 6, 7, 7, 4, 6, 6], 9)],
    [C.conf, sparse('2:5', [5, 6, 6, 5, 7, 5, 6, 8, 4, 5, 6, 6], 9)],
    [C.fc, sparse('2:8 9:32 10:8 13:28 14:10 15:4 18:30 19:7 23:28 24:11 28:25 29:13 33:27 34:13 35:9 38:26 39:13 43:27 44:14 48:27 49:10 53:26 54:12 58:25 59:9 63:26 64:10 68:27 69:11 73:24 74:10 78:25 79:15 83:31 84:12 88:27 89:11 93:29 94:11 98:31 99:10 103:25 104:12 108:30 109:10 113:30 114:10', [7, 6, 8, 7, 9, 6, 7], 9)],
    [C.fcm, dense('0 4 10 0 13 21 8 7 7 31 13 12 8 9 34 12 10 11 6 30 14 8 7 8 30 12 8 8 10 32 11 10 9 9 30 14 7 9 9 33 11 10 8 9 29 13 12 12 8 32 16 11 9 9 30 12 8 8 8 31 7 5 8 7 31 11 10 6 8 32 11 8 10 8 30 8 8 8 9 34 10 8 7 8 33 11 8 7 8 26 14 9 8 10 34 11 8 10 8 29 10 11 9 9 32 13 10 8 7 35 13 10 9 11')],
    [C.home, dense('0 13 13 0 31 14 11 13 13 36 14 13 8 12 38 12 14 13 14 39 13 13 13 13 37 15 14 12 13 39 15 16 15 11 36 20 11 14 15 37 16 12 14 13 39 13 16 12 13 39 15 15 11 14 35 10 10 14 11 36 12 12 13 10 38 14 13 12 10 34 11 9 13 9 40 13 13 14 13 40 14 12 16 13 39 14 13 14 13 38 12 15 13 15 40 13 13 15 12 37 16 12 13 14 39 13 14 15 14 40 12 14 13 14')],
    [C.login, dense('0 3 7 0 2 8 13 8 8 8 12 14 8 13 11 11 11 11 7 8 9 8 9 8 10 9 6 10 11 12 8 11 11 9 12 11 7 10 10 10 10 9 10 12 9 9 13 12 8 12 10 10 9 10 10 9 9 8 11 11 5 4 7 8 8 8 10 8 9 10 9 8 12 11 9 6 9 9 9 10 10 8 8 8 12 10 9 12 8 9 9 10 11 9 11 9 10 9 12 11 8 10 10 12 8 10 10 9 12 9 11 10 9 10')],
    [C.order, sparse('2:5 12:8 34:7 73:3 98:2 103:8 77:5', [5, 5, 5, 4, 6, 5, 4, 6, 6, 4, 6, 5, 7], 9)],
    [C.pay, sparse('2:4', [6, 7, 5, 5, 4, 5, 5, 7, 5, 6, 4, 6], 9)],
    [C.ship, sparse('2:5 9:5 10:7 11:9 12:5 13:5 84:9 73:3', [7, 8, 6, 6, 7, 6, 5, 7, 5, 8, 7, 6, 5, 6, 6], 9)]
  ] },
  { id: 'art', x0: 91.9, dx: 13.09, grid: 81, max: 50, step: 10, unit: 'K', yx: 53, legend: NAMES, series: [
    [C.json, sparse('1:5.4 8:4.7', 0)],
    [C.add, sparse('9:3.3', 0.3)],
    [C.addm, sparse('2:.5 7:0 9:8 10:2.6', 1.1, 9)],
    [C.chk, sparse('2:5.4 7:0.2 8:4.5 9:7.5 10:2 13:2.4 14:8.5 15:22 16:33.3 17:23 18:1.5 58:6 59:12.5 60:21.2 61:1 62:22 63:4 64:12.7 65:7 66:17 67:17 68:1.5 69:10.8 70:10.7 71:50 72:27 73:8.5 74:15 75:18.5 76:17 77:17 78:3.5', 1.1)],
    [C.chkm, sparse('9:3.5 14:8.5 58:2 63:.5 64:3 65:15 66:5 67:1 68:6 69:1.5 71:2.5 73:1 76:1 77:4.2 78:1.3', 0.4)],
    [C.fc, sparse('9:8.6 10:2.5 14:2.4 15:1.7 16:3 17:1 19:5.1 24:7.8 25:2.1 26:1.5 27:1.8 29:10.3 32:2 34:12 35:1.7 38:1.6 41:1.8 44:7.8 47:2 49:15.5 50:1.6 52:2.5 54:10.3 59:12.8 61:2.3 62:2.2 64:7.2 66:1.8 69:3.3 70:0 71:2 72:2 74:12 77:2.5 82:3.5 84:2 85:3 89:6.2 94:8.5 95:1.5 99:2.3 101:2 102:2 104:7.4 105:1.5 109:5 111:1.5 114:3.2', 0.7, 9)],
    [C.fcm, sparse('2:1.4 9:8.2 11:1 16:3.1 19:4.5 21:1.9 22:2.4 24:10.2 29:9.4 34:6.5 39:5 44:5.7 49:9.7 54:14.3 59:12.5 64:11.2 65:5 66:2 69:3.8 74:4.6 79:13 85:1.5 86:2 87:1.6 89:3 92:2.2 94:17.3 95:2.2 96:1.3 99:3.2 104:9.1 105:2.3 109:3.7', 0.6, 9)],
    [C.home, sparse('1:1.6 8:4', 0)],
    [C.login, sparse('1:3.2 8:4.4', 0)],
    [C.order, sparse('2:2.1 7:.4 8:0 9:3.1 10:1 11:3 12:2.7 14:4.7 16:5.6 17:3.4 58:2.7 60:3 61:3 63:2.5 64:9 66:4 67:3 68:6.4 69:7.8 70:3.95 74:6.7 75:6.2 76:3.4 77:2.8', 0.9)],
    [C.ship, sparse('0:0', 0)]
  ], cursor: { i: 70, dots: [[10.7, C.chk], [3.95, C.order], [1, C.addm], [0, C.ship]] } },
  { id: 'epm', x0: 85.4, dx: 13.15, grid: 74, max: 20, step: 5, unit: '', yx: 52,
    legend: [['Add to Cart', '#26708a'], ['Checkout', '#168980'], ['Fetch Catalog', '#263235'], ['Fetch Catalog - Mobile', '#bb4a4a'], ['Login - Mobile', '#475052']], series: [
    ['#475052', [[0, 0], [7, 0]]],
    ['#168980', sparse('2:1 9:5 10:1 13:12 14:4 16:2 18:13 19:2 22:1 23:6 24:3 25:1 28:17 29:2 30:1 33:13 35:1 36:1 38:11 39:5 40:2 41:2 42:1 43:11 44:4 45:2 46:1 48:9 49:4 50:3 51:1 52:1 53:13 54:3 55:3 58:9 59:4 62:2 63:11 64:3 65:1 66:1 68:7 69:2 70:1 71:1 73:11 74:5 76:1 78:15 79:2 80:2 81:1 83:11 84:1 85:1 86:1 88:10 90:1 91:1 92:2 93:13 94:1 95:1 96:2 97:1 98:11 99:3 100:1 103:10 104:4 105:1 106:1 108:12 109:3 110:1 112:3 113:16 114:1 115:1 117:1')],
    ['#26708a', sparse('9:2 13:2 18:2 23:2 24:1 26:1 27:1 28:1 29:2 30:1 32:1 33:2 34:1 37:1 43:2 45:1 46:1 48:3 50:1 53:2 54:3 58:2 60:1 64:1 68:2 69:1 71:1 73:2 74:1 75:1 80:1 81:1 82:1 83:4 84:2 88:1 91:1 93:1 96:1 98:1 100:1 104:2 105:1 106:1 108:2 113:1')],
    ['#263235', sparse('9:11 10:1 14:1 15:1 17:1 19:1 25:1 29:1 31:1 32:1 34:1 35:2 37:1 38:3 40:1 41:1 44:3 47:2 49:1 50:2 51:1 52:1 54:2 58:3 59:2 61:3 63:1 64:1 69:1 71:1 78:1 79:1 82:1 83:1 89:1 90:1 93:2 94:1 95:1 99:1 100:1 104:1 108:1 109:2')],
    ['#bb4a4a', sparse('13:2 16:1 17:1 19:1 22:1 24:1 29:2 32:1 34:1 39:2 44:2 47:1 49:2 50:1 54:1 57:1 58:1 59:3 63:1 65:1 68:1 69:1 71:1 74:1 75:1 79:2 81:1 82:1 83:1 84:1 85:1 87:1 89:1 92:2 95:1 99:1 102:1 104:1 105:2 114:1 117:1').slice(2)]
  ] }
];

charts.forEach(c => {
  const host = document.getElementById(c.id);
  host.querySelector('.legend').innerHTML = '<b>EntityName</b>' + c.legend.map(([n, k]) => `<span><i style="background:${k}"></i>${n}</span>`).join('');
  const Y = v => 184 - v / c.max * 174, X = i => c.x0 + i * c.dx;
  let s = '';
  for (let v = 0; v <= c.max; v += c.step) {
    s += `<path d="M${c.grid} ${Y(v)}H1632" stroke="#ebebeb" stroke-width="1.300"/><text x="${c.yx + (c.unit ? 20 : 13)}" y="${Y(v) + 4}" text-anchor="end">${v}${c.unit}</text>`;
  }
  ['1:15', '1:30', '1:45', '2:00', '2:15', '2:30', '2:45'].forEach((t, n) => {
    s += `<text x="${X(13 + 15 * n)}" y="199" text-anchor="middle">${t} PM</text>`;
  });
  c.series.forEach(([k, pts]) => {
    s += `<polyline stroke="${k}" points="${pts.map(([i, v]) => X(i).toFixed(1) + ',' + Y(v).toFixed(1)).join(' ')}"/>`;
  });
  if (c.cursor) {
    const x = X(c.cursor.i);
    s += `<path d="M${x} 10V184" stroke="#777" stroke-opacity=".6" stroke-width="1.800"/>`;
    c.cursor.dots.forEach(([v, k]) => { s += `<circle cx="${x}" cy="${Y(v)}" r="3" fill="${k}"/>`; });
  }
  host.insertAdjacentHTML('beforeend', `<svg class="plot" width="1600" height="205" viewBox="48.5 ${c.id === 'art' ? -1 : -2} 1600 205">${s}</svg>`);
});

document.querySelector('.rows').innerHTML = [['Add to Cart', '47.00', '#83702a'], ['Add To Cart - Mobile', '1004.00', '#364042'], ['Checkout', '10654.00', '#50747e'], ['Checkout - Mobile', '44.00', '#8a553e'], ['Confirm Order', '2.00', '#593f56'], ['Fetch Catalog', '8.00', '#183038'], ['Fetch Catalog - Mobile', '2.00', '#5f5250'], ['Homepage', '2.00', '#0f72c4'], ['Login - Mobile', '4.00', '#fdb366'], ['Order.update', '3947.00', '#a8f01c']]
  .map(([n, v, k]) => `<div><i style="background:${k}"></i><span>${n}</span><b>${v}</b></div>`).join('');

const table = '<svg width="13" height="12" viewBox="0 0 13 12"><path d="M0 0h13v12H0z" fill="#999"/><path d="M1 4h3v2H1zM5 4h3v2H5zM9 4h3v2H9zM1 6.700h3v2H1zM5 6.700h3v2H5zM9 6.700h3v2H9zM1 9.400h3v2H1zM5 9.400h3v2H5zM9 9.400h3v2H9z" fill="#fff"/></svg>';
document.querySelector('.list').insertAdjacentHTML('beforeend', ['BT entities hour', 'BT EPM metricvalues', 'businesstransactions', 'controllers', 'ERR entities full', 'ERR entities hour', 'ERR EPM metricvalu...', 'errors', 'informationpoints', 'IP ART metricvalues', 'IP CPM metricvalues', 'IP entities full', 'IP entities hour', 'IP EPM metricvalues', 'NODE ART metricva...', 'NODE CPM metricv...', 'NODE entities full', 'NODE entities hour', 'NODE EPM metricv...', 'nodes', 'SEP ART metricvalues', 'SEP CPM metricvalu...', 'SEP entities full', 'SEP entities hour', 'SEP EPM metricvalu...', 'serviceendpoints', 'TIER ART metricvalu...', 'TIER CPM metricval...', 'TIER entities full', 'TIER entities hour', 'TIER EPM metricval...', 'tiers']
  .map(n => `<div><i class="tri"></i>${table}${n}</div>`).join(''));
```
